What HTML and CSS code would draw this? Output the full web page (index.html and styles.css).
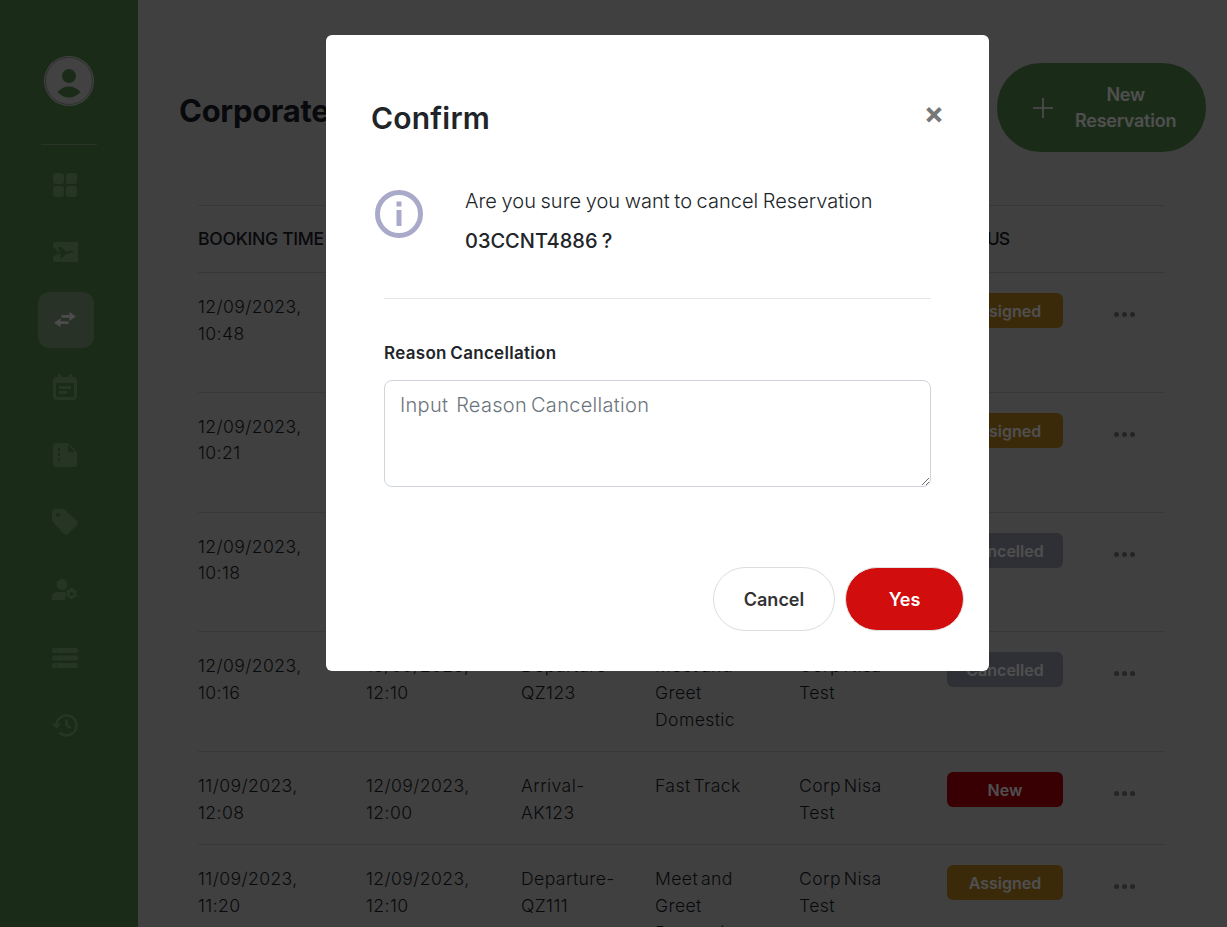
FILE: index.html
```html
<!DOCTYPE html>
<html lang="en">
<head>
<meta charset="utf-8">
<title>Corporate Reservation</title>
<link rel="stylesheet" href="styles.css">
</head>
<body>
<div class="app">
  <aside class="sidebar">
    <div class="avatar">
      <svg viewBox="0 0 50 50" width="50" height="50"><circle cx="25" cy="25" r="23.500" fill="none" class="ring"/><circle cx="25" cy="20" r="7" class="person"/><path class="person" d="M13.500 36c3-3.500 7-5.500 11.500-5.500s8.500 2 11.500 5.500c-3 3.500-7 5.500-11.500 5.500s-8.500-2-11.500-5.500z"/></svg>
    </div>
    <div class="side-divider"></div>
    <nav class="nav">
      <a class="nav-item"><svg viewBox="0 0 26 26" width="26" height="26"><rect x="1" y="1" width="11" height="11" rx="3"/><rect x="14" y="1" width="11" height="11" rx="3"/><rect x="1" y="14" width="11" height="11" rx="3"/><rect x="14" y="14" width="11" height="11" rx="3"/></svg></a>
      <a class="nav-item"><svg viewBox="0 0 26 22" width="26" height="22"><path d="M3 1h22a1 1 0 0 1 1 1v18a1 1 0 0 1-1 1H3a2 2 0 0 1-2-2v-4a4 4 0 0 0 0-8V3a2 2 0 0 1 2-2z"/><path class="cut" d="M1 10l7 1-2-5h3l5 4.500 6-1c2-.3 2 1.700 0 2.300l-6 1.200-4 4H8l1-4-5 .5z"/></svg></a>
      <a class="nav-item active"><svg viewBox="0 0 26 20" width="24" height="18"><path d="M18 1l7 5-7 5V7.500H9v-3h9zM8 8v3.500h9v3H8V18l-7-5z"/></svg></a>
      <a class="nav-item"><svg viewBox="0 0 24 26" width="24" height="26"><path fill-rule="evenodd" d="M5 0h3v3h8V0h3v3h1a4 4 0 0 1 4 4v15a4 4 0 0 1-4 4H4a4 4 0 0 1-4-4V7a4 4 0 0 1 4-4h1zM3 9v12a2 2 0 0 0 2 2h14a2 2 0 0 0 2-2V9zm3 3h12v3H6zm0 5h8v3H6z"/></svg></a>
      <a class="nav-item"><svg viewBox="0 0 24 24" width="24" height="24"><path fill-rule="evenodd" d="M3 0h12l9 9v12a3 3 0 0 1-3 3H3a3 3 0 0 1-3-3V3a3 3 0 0 1 3-3zm2 5v3h2V5zm0 5v3h2v-3zm0 5v3h2v-3zm10-13v7h7z"/></svg></a>
      <a class="nav-item"><svg viewBox="0 0 26 26" width="26" height="26"><path fill-rule="evenodd" d="M3 0h8a3 3 0 0 1 2 1l12 11a3 3 0 0 1 0 4l-9 9a3 3 0 0 1-4 0L1 13a3 3 0 0 1-1-2V3a3 3 0 0 1 3-3zm3 4a2 2 0 1 0 0 4 2 2 0 0 0 0-4z"/></svg></a>
      <a class="nav-item"><svg viewBox="0 0 26 22" width="26" height="22"><circle cx="10" cy="5.500" r="5.500"/><path d="M0 21v-3c0-3.500 3-5 6-5h7l1 2-1 6z"/><path fill-rule="evenodd" d="M18 9h3l.5 2 2-.5 1.500 2.500-1.500 1.500 1.500 1.500-1.500 2.500-2-.5-.5 2h-3l-.5-2-2 .5-1.500-2.500 1.500-1.500-1.500-1.500 1.500-2.500 2 .5zm1.500 4a2 2 0 1 0 0 4 2 2 0 0 0 0-4z"/></svg></a>
      <a class="nav-item"><svg viewBox="0 0 26 20" width="26" height="20"><path fill-rule="evenodd" d="M2.500 0h21a2.500 2.500 0 0 1 0 5h-21a2.500 2.500 0 0 1 0-5zm1 1.800v1.400h1.400V1.800zM2.500 7.500h21a2.500 2.500 0 0 1 0 5h-21a2.500 2.500 0 0 1 0-5zm1 1.800v1.400h1.400V9.300zM2.500 15h21a2.500 2.500 0 0 1 0 5h-21a2.500 2.500 0 0 1 0-5zm1 1.800v1.400h1.400v-1.400z"/></svg></a>
      <a class="nav-item"><svg viewBox="0 0 26 24" width="26" height="24"><path class="stroke" d="M4.500 12a10 10 0 1 1 3 7.500"/><path d="M0 10.500h9L4.500 16z"/><path class="stroke" d="M14.500 6.500V12l4 3"/></svg></a>
    </nav>
  </aside>
  <main class="main">
    <header class="page-head">
      <h1 class="page-title">Corporate Reservation</h1>
      <button class="new-btn"><svg class="plus" viewBox="0 0 20 20" width="20" height="20"><path d="M10 0v20M0 10h20"/></svg><span class="new-label">New Reservation</span></button>
    </header>
    <table class="res-table">
      <colgroup><col class="c1"><col class="c2"><col class="c3"><col class="c4"><col class="c5"><col class="c6"><col class="c7"></colgroup>
      <thead>
        <tr><th>BOOKING TIME</th><th>SERVICE TIME</th><th>FLIGHT</th><th>SERVICE</th><th>CUSTOMER</th><th>STATUS</th><th></th></tr>
      </thead>
      <tbody>
        <tr><td>12/09/2023, 10:48</td><td>13/09/2023, 12:10</td><td>Departure-QZ123</td><td>Meet and Greet Domestic</td><td>Corp Nisa Test</td><td><span class="badge assigned">Assigned</span></td><td><span class="dots"><i></i><i></i><i></i></span></td></tr>
        <tr><td>12/09/2023, 10:21</td><td>13/09/2023, 12:10</td><td>Departure-QZ123</td><td>Meet and Greet Domestic</td><td>Corp Nisa Test</td><td><span class="badge assigned">Assigned</span></td><td><span class="dots"><i></i><i></i><i></i></span></td></tr>
        <tr><td>12/09/2023, 10:18</td><td>13/09/2023, 12:10</td><td>Departure-QZ123</td><td>Meet and Greet Domestic</td><td>Corp Nisa Test</td><td><span class="badge cancelled">Cancelled</span></td><td><span class="dots"><i></i><i></i><i></i></span></td></tr>
        <tr><td>12/09/2023, 10:16</td><td>13/09/2023, 12:10</td><td>Departure-QZ123</td><td>Meet and Greet Domestic</td><td>Corp Nisa Test</td><td><span class="badge cancelled">Cancelled</span></td><td><span class="dots"><i></i><i></i><i></i></span></td></tr>
        <tr><td>11/09/2023, 12:08</td><td>12/09/2023, 12:00</td><td>Arrival-AK123</td><td>Fast Track</td><td>Corp Nisa Test</td><td><span class="badge new">New</span></td><td><span class="dots"><i></i><i></i><i></i></span></td></tr>
        <tr><td>11/09/2023, 11:20</td><td>12/09/2023, 12:10</td><td>Departure-QZ111</td><td>Meet and Greet Domestic</td><td>Corp Nisa Test</td><td><span class="badge assigned">Assigned</span></td><td><span class="dots"><i></i><i></i><i></i></span></td></tr>
      </tbody>
    </table>
  </main>
</div>
<div class="backdrop"></div>
<section class="modal">
  <div class="modal-head">
    <h2 class="modal-title">Confirm</h2>
    <span class="close">&times;</span>
  </div>
  <div class="message">
    <svg class="info" viewBox="0 0 48 48" width="48" height="48"><circle cx="24" cy="24" r="21.500"/><rect x="21.500" y="20" width="5" height="16"/><rect x="21.500" y="11.500" width="5" height="5"/></svg>
    <div class="message-text">
      <p class="msg-line">Are you sure you want to cancel Reservation</p>
      <p class="msg-code">03CCNT4886 ?</p>
    </div>
  </div>
  <div class="form">
    <label class="form-label" for="reason">Reason Cancellation</label>
    <textarea class="form-input" id="reason" placeholder="Input  Reason Cancellation"></textarea>
  </div>
  <div class="actions">
    <button class="btn btn-cancel">Cancel</button>
    <button class="btn btn-yes">Yes</button>
  </div>
</section>
</body>
</html>
```
FILE: styles.css
```css
* { box-sizing: border-box; }
html, body { margin: 0; height: 100%; overflow: hidden; }
body { font-family: Inter, "Liberation Sans", sans-serif; background: #c2c2c2; color: #1a1d26; }
.app { display: flex; height: 927px; overflow: hidden; }

.sidebar { width: 138px; flex: none; background: #4f8549; display: flex; flex-direction: column; align-items: center; padding-top: 56px; }
.avatar { width: 50px; height: 50px; border-radius: 50%; background: #c8c8c8; }
.avatar svg { display: block; }
.ring { stroke: #8c8c8c; stroke-width: 1; }
.person { fill: #4f8549; }
.side-divider { width: 56px; height: 1px; background: #7f9f7a; margin-top: 38px; }
.nav { display: flex; flex-direction: column; gap: 11.600px; margin: 11.500px 6px 0 0; }
.nav-item { width: 56px; height: 56px; border-radius: 12px; display: flex; align-items: center; justify-content: center; padding-right: 2px; }
.nav-item svg { fill: #76a270; }
.nav-item svg .cut { fill: #4f8549; }
.nav-item svg .stroke { fill: none; stroke: #76a270; stroke-width: 2.600; }
.nav-item.active { background: #7c9773; }
.nav-item.active svg { fill: #e6e6e6; }

.main { flex: 1; min-width: 0; padding: 63px 21px 0 41px; }
.page-head { display: flex; align-items: flex-start; justify-content: space-between; height: 142px; }
.page-title { margin: 26px 0 0; font-size: 31px; font-weight: 700; line-height: 44px; letter-spacing: -.3px; color: #1a1d26; }
.new-btn { width: 209px; height: 89px; border: 0; border-radius: 44px; background: #4f8549; color: #eee; display: flex; align-items: center; font: 600 18px/26px Inter, sans-serif; letter-spacing: -.25px; padding: 0 30px 0 36px; }
.plus { flex: none; stroke: #eee; stroke-width: 1.600; fill: none; }
.new-label { flex: 1; text-align: center; padding-left: 22px; }

.res-table { margin-left: 19px; width: 967px; border-collapse: collapse; table-layout: fixed; font-size: 17.600px; line-height: 26.600px; letter-spacing: .4px; word-spacing: -2.500px; }
.c1 { width: 168px; } .c2 { width: 155px; } .c3 { width: 134px; } .c4 { width: 144px; } .c5 { width: 148px; } .c6 { width: 166px; } .c7 { width: 52px; }
.res-table th { text-align: left; font-weight: 500; font-size: 17.600px; letter-spacing: -.3px; word-spacing: 0; padding: 20px 0 19.500px; border-top: 1px solid #ababab; border-bottom: 1px solid #a6a6a6; white-space: nowrap; }
.res-table th:nth-child(6) { letter-spacing: -1px; }
.res-table td { vertical-align: top; padding: 21px 36px 18px 0; border-bottom: 1px solid #ababab; font-weight: 300; }
.res-table td:nth-child(1) { padding-right: 44px; }
.res-table td:nth-child(2) { padding-right: 30px; }
.res-table td:nth-child(3) { padding-right: 24px; }
.res-table td:nth-child(4) { padding-right: 36px; }
.res-table td:nth-child(5) { padding-right: 40px; }
.res-table td:nth-child(6), .res-table td:nth-child(7) { padding-right: 0; }
.badge { display: block; width: 116px; height: 35px; margin-top: -1px; padding-top: 1px; border-radius: 6px; color: #eee; text-align: center; font-size: 16px; font-weight: 600; line-height: 35px; letter-spacing: 0; }
.assigned { background: #b37f1e; }
.cancelled { background: #8e91a4; }
.new { background: #aa000c; }
.dots { display: flex; gap: 3px; height: 43px; margin-top: -1px; padding-left: 1px; align-items: center; }
.dots i { width: 5px; height: 5px; border-radius: 50%; background: #707070; }

.backdrop { position: fixed; inset: 0; background: rgba(0, 0, 0, .67); }
.modal { position: fixed; left: 326px; top: 35px; width: 663px; height: 636px; background: #fff; border-radius: 6px; padding: 60px 25px 40px 45px; color: #212529; display: flex; flex-direction: column; }
.modal-head { display: flex; justify-content: space-between; align-items: flex-start; height: 46px; }
.modal-title { margin: 0; font-size: 30px; font-weight: 600; line-height: 46px; letter-spacing: .2px; }
.close { font-size: 30px; font-weight: 700; line-height: 36px; color: #777; margin-right: 20px; }
.message { display: flex; gap: 42px; margin-top: 49px; height: 108px; padding-left: 4px; }
.info { flex: none; fill: #a9a9c9; }
.info circle { fill: none; stroke: #a9a9c9; stroke-width: 5; }
.message-text { margin-top: -4px; word-spacing: -1px; }
.msg-line { margin: 0; font-size: 20px; font-weight: 300; line-height: 30px; }
.msg-code { margin: 10px 0 0; font-size: 20px; font-weight: 500; line-height: 30px; }
.form { margin-left: 13px; width: 547px; border-top: 1px solid #e5e5e5; padding-top: 42px; display: flex; flex-direction: column; }
.form-label { font-size: 17px; font-weight: 600; line-height: 24px; letter-spacing: .3px; word-spacing: -1px; }
.form-input { margin-top: 15px; height: 107px; border: 1px solid #ced4da; border-radius: 8px; padding: 9px 15px; font: 300 20px/30px Inter, sans-serif; letter-spacing: .3px; word-spacing: -2px; color: #212529; }
.form-input::placeholder { color: #6c757d; opacity: 1; }
.actions { display: flex; justify-content: flex-end; gap: 10px; margin-top: 80px; }
.btn { height: 64px; padding-top: 2px; border-radius: 32px; font: 600 18px/24px Inter, sans-serif; }
.btn-cancel { width: 122px; background: #fff; border: 1px solid #ddd; color: #333; }
.btn-yes { width: 119px; background: #d10d0d; border: 1px solid #e3e3e3; color: #fff; }
```
